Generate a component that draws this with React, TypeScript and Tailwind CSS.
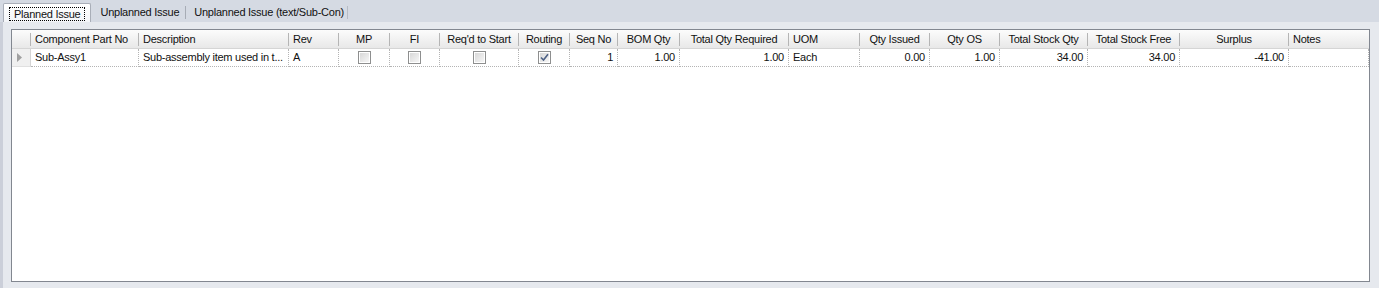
import React from "react";

type Col = { label: string; w: number; hAlign: "left" | "center"; value?: string; dAlign?: "left" | "right" | "check"; checked?: boolean };

const cols: Col[] = [
  { label: "Component Part No", w: 108, hAlign: "left", value: "Sub-Assy1", dAlign: "left" },
  { label: "Description", w: 150, hAlign: "left", value: "Sub-assembly item used in t...", dAlign: "left" },
  { label: "Rev", w: 50, hAlign: "left", value: "A", dAlign: "left" },
  { label: "MP", w: 51, hAlign: "center", dAlign: "check", checked: false },
  { label: "FI", w: 50, hAlign: "center", dAlign: "check", checked: false },
  { label: "Req'd to Start", w: 79, hAlign: "center", dAlign: "check", checked: false },
  { label: "Routing", w: 51, hAlign: "center", dAlign: "check", checked: true },
  { label: "Seq No", w: 48, hAlign: "center", value: "1", dAlign: "right" },
  { label: "BOM Qty", w: 62, hAlign: "center", value: "1.00", dAlign: "right" },
  { label: "Total Qty Required", w: 109, hAlign: "center", value: "1.00", dAlign: "right" },
  { label: "UOM", w: 71, hAlign: "left", value: "Each", dAlign: "left" },
  { label: "Qty Issued", w: 70, hAlign: "center", value: "0.00", dAlign: "right" },
  { label: "Qty OS", w: 70, hAlign: "center", value: "1.00", dAlign: "right" },
  { label: "Total Stock Qty", w: 88, hAlign: "center", value: "34.00", dAlign: "right" },
  { label: "Total Stock Free", w: 92, hAlign: "center", value: "34.00", dAlign: "right" },
  { label: "Surplus", w: 109, hAlign: "center", value: "-41.00", dAlign: "right" },
  { label: "Notes", w: 80, hAlign: "left", value: "", dAlign: "left" },
];

function CheckBox({ checked }: { checked?: boolean }) {
  return (
    <div className="w-[13px] h-[13px] border border-[#8e8f8f] bg-white p-[1px]">
      <div className="w-full h-full bg-gradient-to-br from-[#d8d8d8] to-[#f6f6f6] flex items-center justify-center">
        {checked && (
          <svg width="9" height="9" viewBox="0 0 9 9">
            <path d="M1 4.5 L3.5 7 L8 1.2" fill="none" stroke="#4d6185" strokeWidth="1.6" />
          </svg>
        )}
      </div>
    </div>
  );
}

export default function App() {
  return (
    <div className="w-[1379px] h-[288px] bg-[#e6e9ee] flex flex-col text-[11px] text-[#111] font-['Liberation_Sans',Arial,sans-serif] tracking-[-0.25px] overflow-hidden">
      {/* Tabs strip */}
      <div className="h-[22px] bg-[#d5dae3] flex items-end pl-[3px] shrink-0">
        <div className="h-[19px] px-[5px] pt-[3px] pb-[1px] bg-gradient-to-b from-white to-[#f3f5f8] border border-b-0 border-[#a9aeb8] rounded-t-[2px] flex items-stretch">
          <div className="border border-dotted border-black px-[4px] flex items-center leading-none">Planned Issue</div>
        </div>
        <div className="h-[19px] flex items-center pl-[9px] pr-[6px]">Unplanned Issue</div>
        <div className="h-[19px] flex items-center">
          <div className="w-px h-[13px] bg-[#a7acb5]" />
        </div>
        <div className="h-[19px] flex items-center pl-[8px] pr-[3px]">Unplanned Issue (text/Sub-Con)</div>
        <div className="h-[19px] flex items-center">
          <div className="w-px h-[13px] bg-[#b7bcc5]" />
        </div>
      </div>
      {/* Panel */}
      <div className="flex-1 flex">
        <div className="w-[3px] bg-[#cbcfd9] shrink-0" />
        <div className="flex-1 pl-[8px] pt-[7px] pr-[9px] pb-[6px] flex">
          <div className="flex-1 border border-[#828790] bg-white flex flex-col">
            {/* Header */}
            <div className="flex h-[19px] bg-gradient-to-b from-[#fcfcfc] to-[#e8e8e8] border-b border-[#d5d5d5]">
              <div className="w-[19px] shrink-0 flex items-center justify-end">
                <div className="w-px h-[13px] bg-[#b5b5b5]" />
              </div>
              {cols.map((c, i) => (
                <div key={i} style={{ width: c.w }} className="shrink-0 flex items-center">
                  <div className={`flex-1 whitespace-nowrap overflow-hidden px-[4px] ${c.hAlign === "center" ? "text-center" : "text-left"}`}>
                    {c.label}
                  </div>
                  {i < cols.length - 1 && <div className="w-px h-[13px] bg-[#b5b5b5]" />}
                </div>
              ))}
            </div>
            {/* Data row */}
            <div className="flex h-[18px]">
              <div className="w-[19px] shrink-0 bg-[#f0f0f0] border-r border-[#d5d5d5] border-b border-b-[#e0e0e0] flex items-center pl-[5px]">
                <svg width="5" height="9" viewBox="0 0 5 9">
                  <path d="M0 0 L5 4.5 L0 9 Z" fill="#a0a0a0" />
                </svg>
              </div>
              {cols.map((c, i) => (
                <div
                  key={i}
                  style={{ width: c.w }}
                  className={`shrink-0 border-r border-b border-dotted border-[#b4b4b4] flex items-center whitespace-nowrap overflow-hidden px-[4px] ${
                    c.dAlign === "right" ? "justify-end" : c.dAlign === "check" ? "justify-center" : "justify-start"
                  }`}
                >
                  {c.dAlign === "check" ? <CheckBox checked={c.checked} /> : c.value}
                </div>
              ))}
            </div>
            <div className="flex-1" />
          </div>
        </div>
      </div>
    </div>
  );
}
